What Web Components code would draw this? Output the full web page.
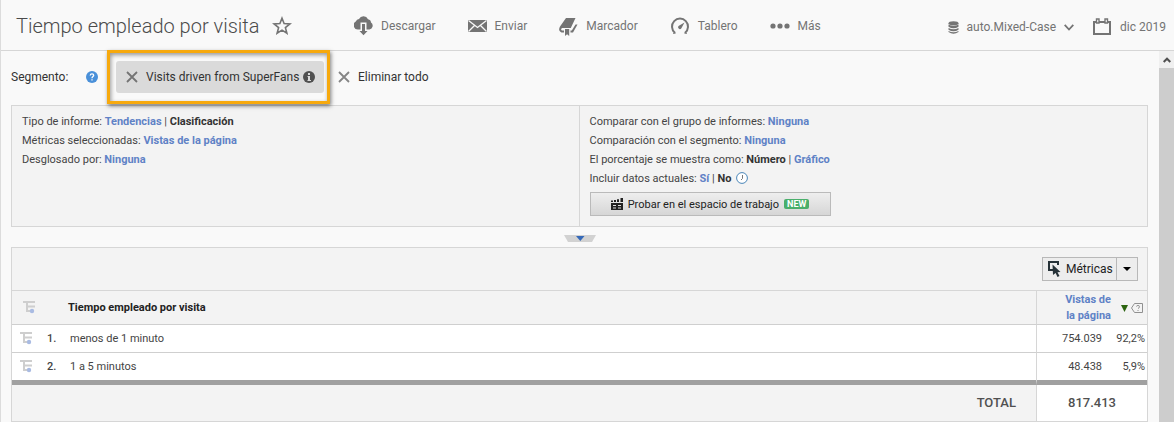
<!DOCTYPE html>
<html lang="es">
<head>
<meta charset="utf-8">
<title>Tiempo empleado por visita</title>
<style>
  body { margin: 0; background: #f9f9f9; color: #444; font: 12px/19px Roboto, "Open Sans", sans-serif; }
</style>
</head>
<body>
<report-app></report-app>

<script>
const base = `
  *, *::before, *::after { box-sizing: border-box; }
  svg { display: block; flex: none; }
  a { color: #5f82c6; text-decoration: none; font-weight: 700; }
  button { font: inherit; color: inherit; background: none; border: 0; padding: 0; margin: 0; }
`;
function define(name, css, html) {
  const t = document.createElement('template');
  t.innerHTML = `<style>${base}${css}</style>${html}`;
  customElements.define(name, class extends HTMLElement {
    constructor() {
      super();
      this.attachShadow({ mode: 'open' }).append(t.content.cloneNode(true));
    }
  });
}

define('tool-button', `
  :host { display: block; flex: none; }
  button { display: flex; align-items: center; gap: 8px; font-size: 12px; color: #747474; }
`, `<button type="button"><slot name="icon"></slot><slot></slot></button>`);

define('report-header', `
  :host { display: flex; align-items: center; height: 51px; padding: 0 8px 0 15px; border-bottom: 1px solid #d6d6d6; white-space: nowrap; }
  h1 { margin: 0; padding-top: 2px; font-size: 20px; line-height: 32px; font-weight: 300; color: #4b4b4b; flex: 0 0 256px; }
  .star { flex: none; margin-right: 62px; padding-top: 2px; }
  nav { display: flex; align-items: center; gap: 32px; padding-top: 2px; }
  .scope { display: flex; gap: 18px; margin-left: auto; padding-top: 4px; }
`, `
  <h1>Tiempo empleado por visita</h1>
  <button class="star" type="button" aria-label="Favorito">
    <svg width="20" height="20" viewBox="0 0 20 20" fill="none" stroke="#747474" stroke-width="1.6"><path d="M10 2.200L12.100 7.600l5.800.3-4.500 3.700 1.500 5.600-4.900-3.100-4.900 3.100 1.500-5.600L2.100 7.900l5.800-.3z"/></svg>
  </button>
  <nav>
    <tool-button>
      <svg slot="icon" width="19" height="20" viewBox="0 0 19 20"><path fill="#747474" d="M4.500 13.500A4.300 4.300 0 0 1 1.800 5.500 4 4 0 0 1 5 3 5 5 0 0 1 14 3.300 3.600 3.600 0 0 1 17 6.600 3.800 3.800 0 0 1 15.500 13.500z"/><path fill="#f9f9f9" d="M6.500 14V6.500h6V14z"/><path fill="#747474" d="M8 8h3v7h2.500l-4 4.200-4-4.200H8z"/></svg>Descargar</tool-button>
    <tool-button>
      <svg slot="icon" width="19" height="14" viewBox="0 0 19 14"><path fill="#747474" d="M0 1h19v12H0z"/><path fill="none" stroke="#f9f9f9" stroke-width="1.300" d="M.5 1.500l9 7 9-7M.5 12.500l6-6M18.500 12.500l-6-6"/></svg>Enviar</tool-button>
    <tool-button>
      <svg slot="icon" width="19" height="19" viewBox="0 0 19 19"><path fill="#747474" d="M7 1h9.500l-4.700 10H4C2 11 1.500 12.800 3 13.500h2v2H2.500C-.5 14.500-.2 11.500 1 9.500zM16.500 7.500h2L14 15.500h-2.500v-2h1.300zM6 12h4.200v7l-2.100-1.800L6 19z"/></svg>Marcador</tool-button>
    <tool-button>
      <svg slot="icon" width="20" height="18" viewBox="0 0 20 18"><path fill="none" stroke="#747474" stroke-width="2" d="M4.800 15.700a8 8 0 1 1 10.400 0M3 15.800h2.500M14.500 15.800H17"/><path fill="#747474" d="M14.500 5.500l-3.100 5.800a1.800 1.800 0 1 1-2.500-2.500z"/></svg>Tablero</tool-button>
    <tool-button>
      <svg slot="icon" width="20" height="6" viewBox="0 0 20 6" fill="#747474"><circle cx="3" cy="3" r="2.600"/><circle cx="10" cy="3" r="2.600"/><circle cx="17" cy="3" r="2.600"/></svg>Más</tool-button>
  </nav>
  <div class="scope">
    <tool-button>
      <svg slot="icon" width="11" height="13" viewBox="0 0 11 13" fill="#747474"><ellipse cx="5.500" cy="2.200" rx="5" ry="2"/><path d="M.5 3.500q5 2.600 10 0v2.200q-5 3.200-10 0zM.5 6.900q5 2.800 10 0v1.800q-5 3.200-10 0zM.5 9.900q5 2.800 10 0v1.200q-5 3.200-10 0z"/></svg>
      auto.Mixed-Case
      <svg width="10" height="7" viewBox="0 0 10 7" fill="none" stroke="#747474" stroke-width="1.800"><path d="M.7.800L5 5.500 9.300.800"/></svg></tool-button>
    <tool-button>
      <svg slot="icon" width="20" height="18" viewBox="0 0 20 18"><path fill="none" stroke="#747474" stroke-width="2" d="M2 4h16v12H2z"/><path fill="#f9f9f9" stroke="#747474" stroke-width="1.400" d="M4.500 1h2.500v4H4.500zM13 1h2.500v4H13z"/></svg>dic 2019</tool-button>
  </div>
`);

define('segment-chip', `
  :host { display: block; position: relative; }
  .chip { display: flex; align-items: center; gap: 4px; width: 208px; height: 32px; padding: 0 10px; border-radius: 3px; background: #dadada; color: #333; white-space: nowrap; }
  button { margin-right: 4px; }
  .focus { position: absolute; inset: -11px -6px -11px -9px; border: 3px solid #f7a90d; box-shadow: 1px 2px 4px rgba(0,0,0,.5), inset 1px 2px 4px rgba(0,0,0,.4); pointer-events: none; }
`, `
  <div class="chip">
    <button type="button" aria-label="Quitar segmento"><svg width="12" height="12" viewBox="0 0 12 12" stroke="#747474" stroke-width="1.800"><path d="M1 1l10 10M11 1L1 11"/></svg></button>
    <slot></slot>
    <svg width="12" height="12" viewBox="0 0 12 12"><circle cx="6" cy="6" r="6" fill="#505050"/><path fill="#dadada" d="M5 2h2v2H5zM4.500 5H7v4h1v1H4.500V9H5V6h-.5z"/></svg>
  </div>
  <div class="focus"></div>
`);

define('segment-bar', `
  :host { display: flex; align-items: center; height: 54px; padding: 0 10px 2px; color: #333; white-space: nowrap; }
  .label { width: 75px; }
  segment-chip { margin: 0 14px 0 18px; }
  .clear { display: flex; align-items: center; gap: 8px; }
`, `
  <span class="label">Segmento:</span>
  <svg width="12" height="12" viewBox="0 0 12 12"><circle cx="6" cy="6" r="6" fill="#4a90d9"/><path fill="none" stroke="#fff" stroke-width="1.300" d="M4.200 4.500Q4.400 2.800 6 2.800T7.700 4.300Q7.700 5 6.800 5.600 6 6.100 6 7.200M6 8.300v1.300"/></svg>
  <segment-chip>Visits driven from SuperFans</segment-chip>
  <button class="clear" type="button"><svg width="12" height="12" viewBox="0 0 12 12" stroke="#858585" stroke-width="1.800"><path d="M1 1l10 10M11 1L1 11"/></svg>Eliminar todo</button>
`);

define('report-options', `
  :host { display: grid; grid-template-columns: calc(50% - 1px) 1fr; height: 122px; margin: 0 11px 0 10px; border: 1px solid #d6d6d6; background: #f3f3f3; font-size: 11px; }
  div { padding: 6px 10px; white-space: nowrap; }
  div + div { border-left: 1px solid #d6d6d6; }
  p { margin: 0; }
  b { color: #333; }
  .now { display: flex; align-items: center; gap: 5px; height: 18px; }
  .try { display: flex; align-items: center; justify-content: center; gap: 5px; width: 241px; height: 24px; margin-top: 5px; border: 1px solid #bababa; background: linear-gradient(#eee, #d6d6d6); color: #222; }
  .new { padding: 0 3px; border-radius: 2px; background: #4aaf6b; color: #fff; font: 700 9px/10px Roboto, sans-serif; }
`, `
  <div>
    <p>Tipo de informe: <a href="#">Tendencias</a> | <b>Clasificación</b></p>
    <p>Métricas seleccionadas: <a href="#">Vistas de la página</a></p>
    <p>Desglosado por: <a href="#">Ninguna</a></p>
  </div>
  <div>
    <p>Comparar con el grupo de informes: <a href="#">Ninguna</a></p>
    <p>Comparación con el segmento: <a href="#">Ninguna</a></p>
    <p>El porcentaje se muestra como: <b>Número</b> | <a href="#">Gráfico</a></p>
    <p class="now"><span>Incluir datos actuales: <a href="#">Sí</a> | <b>No</b></span>
      <svg width="12" height="12" viewBox="0 0 12 12" fill="none"><circle cx="6" cy="6" r="5.400" fill="#fff" stroke="#4a86b8"/><path stroke="#777" d="M6.500 3v3.500L5 8"/></svg></p>
    <button class="try" type="button">
      <svg width="12" height="12" viewBox="0 0 12 12" fill="#222"><path fill-rule="evenodd" d="M0 5h12v7H0zM2 7v1h3V7zM7 7v1h3V7zM2 9.500v1h3v-1zM7 9.500v1h3v-1z"/><path d="M0 2.500h2V4H0zM3 2h2v2H3zM6 1.300h2V4H6zM9.500 0H12v4H9.500z"/></svg>
      Probar en el espacio de trabajo
      <span class="new">NEW</span>
    </button>
  </div>
`);

define('panel-toggle', `
  :host { display: flex; justify-content: center; height: 20px; padding-top: 8px; }
  button { height: 7px; }
`, `
  <button type="button" aria-label="Contraer panel"><svg width="32" height="7" viewBox="0 0 32 7"><path fill="#d2d2d2" d="M0 0h32l-4 7H4z"/><path fill="#3569b8" d="M12 1h8.500l-4.200 5z"/></svg></button>
`);

define('metrics-button', `
  :host { display: flex; width: 96px; height: 24px; border: 1px solid #b8b8b8; background: #ededed; color: #222; font-size: 12px; }
  .main { flex: 1; display: flex; align-items: center; gap: 5px; padding-left: 5px; }
  .more { display: grid; place-items: center; width: 21px; border-left: 1px solid #b8b8b8; }
`, `
  <button class="main" type="button"><svg width="13" height="16" viewBox="0 0 13 16"><path fill="none" stroke="#263238" stroke-width="2" d="M5 9H1V1h9v3"/><path fill="#263238" d="M4.500 3.500l8 7.500-3 .2 2 3.800-2 .9-1.900-4L5 14z"/></svg><slot></slot></button>
  <button class="more" type="button" aria-label="Más métricas"><svg width="8" height="4" viewBox="0 0 8 4"><path d="M0 0h8L4 4z"/></svg></button>
`);

define('breakdown-icon', `
  :host { display: block; width: 13px; }
`, `<svg width="13" height="13" viewBox="0 0 13 13"><path fill="#cecece" d="M0 0h12v2H0zM3 2h2v9H3zM5 4.500h7v2H5zM5 9h2v2H5z"/><circle cx="9" cy="10" r="2.200" fill="#a9bbe2"/></svg>`);

define('report-table', `
  :host { display: block; margin: 0 11px 0 10px; border: 1px solid #d6d6d6; background: #f3f3f3; font-size: 11px; }
  .tools { display: flex; align-items: center; justify-content: flex-end; height: 43px; padding-right: 9px; border-bottom: 1px solid #d6d6d6; }
  table { width: 100%; table-layout: fixed; border-collapse: separate; border-spacing: 0; }
  th, td { padding: 0; text-align: left; font-weight: 400; white-space: nowrap; border-bottom: 1px solid #cfcfcf; }
  thead th { height: 34px; }
  thead .name { font-weight: 700; color: #222; }
  tbody td { height: 28px; background: #fff; }
  tbody tr:last-child td { border-bottom: 5px solid #a0a0a0; height: 32px; }
  .icon { padding-left: 8px; }
  thead .icon { padding-left: 11px; }
  .index { padding-left: 3px; font-weight: 500; }
  .label { padding-left: 2px; }
  .value { text-align: right; border-left: 1px solid #d6d6d6; }
  .percent { padding-right: 2px; text-align: right; }
  .sort { border-left: 1px solid #d6d6d6; }
  .sort div { display: flex; align-items: center; justify-content: flex-end; gap: 3px; padding: 1px 4px 0 0; line-height: 16px; text-align: right; white-space: normal; }
  .sort a { width: 56px; margin-right: 7px; }
  tfoot th, tfoot td { height: 36px; border: 0; font: 500 13px/18px Roboto, sans-serif; color: #505050; text-align: right; padding-right: 20px; }
  tfoot td { border-left: 1px solid #d6d6d6; background: #fff; text-align: center; padding: 0; }
`, `
  <div class="tools"><metrics-button>Métricas</metrics-button></div>
  <table>
    <colgroup><col style="width:32px"><col style="width:24px"><col><col style="width:66px"><col style="width:45px"></colgroup>
    <thead><tr>
      <th class="icon"><breakdown-icon></breakdown-icon></th><th></th>
      <th class="name">Tiempo empleado por visita</th>
      <th class="sort" colspan="2"><div><a href="#">Vistas de la página</a>
        <svg width="7" height="7" viewBox="0 0 7 7"><path fill="#2d6410" d="M0 0h7L3.500 7z"/></svg>
        <svg width="12" height="10" viewBox="0 0 12 10" fill="none" stroke="#909090"><path d="M3.500.5h8v9h-8L.5 5z"/><path d="M5.500 3.500q0-1 1.500-1t1.500 1.200T7 5.500M7 7v1"/></svg></div></th>
    </tr></thead>
    <tbody>
      <tr><td class="icon"><breakdown-icon></breakdown-icon></td><td class="index">1.</td><td class="label">menos de 1 minuto</td><td class="value">754.039</td><td class="percent">92,2%</td></tr>
      <tr><td class="icon"><breakdown-icon></breakdown-icon></td><td class="index">2.</td><td class="label">1 a 5 minutos</td><td class="value">48.438</td><td class="percent">5,9%</td></tr>
    </tbody>
    <tfoot><tr><th colspan="3">TOTAL</th><td colspan="2">817.413</td></tr></tfoot>
  </table>
`);

define('scroll-rail', `
  :host { display: flex; flex-direction: column; flex: 0 0 15px; background: #cdcdcd; }
  button { display: grid; place-items: center; height: 17px; background: #f0f0f0; }
`, `<button type="button" aria-label="Subir"><svg width="8" height="6" viewBox="0 0 8 6" fill="none" stroke="#505050" stroke-width="2"><path d="M.7 5L4 1.700 7.300 5"/></svg></button>`);

define('report-app', `
  :host { display: flex; flex-direction: column; min-height: 100vh; border-left: 1px solid #dcdcdc; }
  .body { display: flex; flex: 1; }
  main { flex: 1; min-width: 0; }
`, `
  <report-header></report-header>
  <div class="body">
    <main>
      <segment-bar></segment-bar>
      <report-options></report-options>
      <panel-toggle></panel-toggle>
      <report-table></report-table>
    </main>
    <scroll-rail></scroll-rail>
  </div>
`);
</script>
</body>
</html>
